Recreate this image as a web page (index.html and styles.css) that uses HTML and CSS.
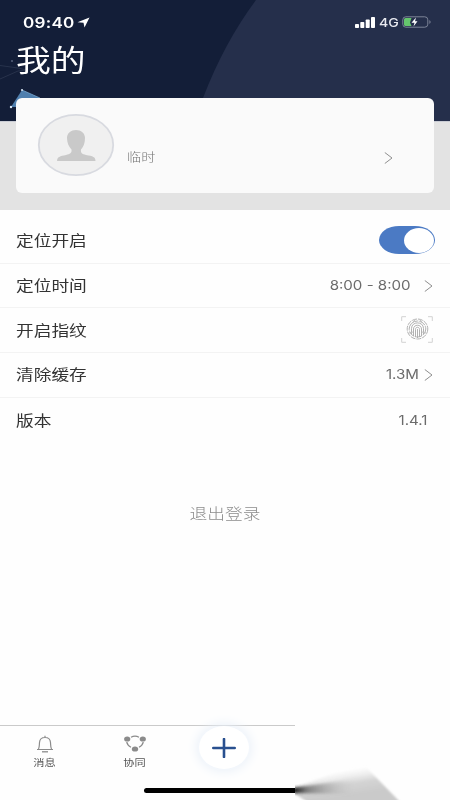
FILE: index.html
```html
<!DOCTYPE html>
<html lang="zh-CN">
<head>
<meta charset="utf-8">
<meta name="viewport" content="width=device-width, initial-scale=1">
<title>我的</title>
<link rel="stylesheet" href="styles.css">
</head>
<body>
<div class="screen">
  <header class="header">
    <svg class="backdrop" width="450" height="121" viewBox="0 0 450 121" aria-hidden="true">
      <path d="M256 0Q224 43 203 98L194 122H450V0Z" fill="#252f4b"/>
      <path d="M0 65.500L18 68L26 70M0 79L18 71L28 70" fill="none" stroke="#2d3852" stroke-width=".8"/>
      <path d="M11 61H13" stroke="#77809a"/>
      <path d="M22 90L40 98L30 107H11Z" fill="#4f7fae"/>
      <path d="M22 90L40 98" stroke="#7fb0d8" stroke-width=".7"/>
      <circle cx="22" cy="90" r="1" fill="#dceaf6"/><circle cx="11" cy="107" r="1.200" fill="#dceaf6"/>
    </svg>
    <div class="status">
      <div class="clock"><span class="wide time">09:40</span>
        <svg width="13" height="11" viewBox="0 0 13 11"><path d="M.5 5.300L12.500.5L7.500 10.500L6.500 5.800Z" fill="#fff"/></svg>
      </div>
      <div class="signals">
        <svg width="20" height="11" viewBox="0 0 20 11" fill="#fff"><rect y="7" width="4" height="4" rx=".8"/><rect x="5.300" y="5" width="4" height="6" rx=".8"/><rect x="10.700" y="2.500" width="4" height="8.500" rx=".8"/><rect x="16" width="4" height="11" rx=".8"/></svg>
        <span class="wide net">4G</span>
        <svg width="30" height="12" viewBox="0 0 30 12"><rect x=".8" y=".8" width="25" height="10.400" rx="3" fill="none" stroke="#7c8498"/><path d="M3.500 2H9.500L8 6.500L9.500 10H3.500Q2 10 2 8.500V3.500Q2 2 3.500 2Z" fill="#65c56d"/><path d="M14 1.500L9.500 6.700H12.500L11.500 10.500L15.500 5.300H13Z" fill="#fff"/><path d="M27.500 4Q29.500 6 27.500 8Z" fill="#9198aa"/></svg>
      </div>
    </div>
    <h1 class="title wide">我的</h1>
    <section class="card">
      <svg class="avatar" width="78" height="64" viewBox="0 0 78 64"><ellipse cx="39" cy="32" rx="37.200" ry="30.200" fill="#f0f0f0" stroke="#d8dae0" stroke-width="1.800"/><path d="M39 17C44 17 48 20 48 25C48 30 46.500 34 44 36.500C43.500 40 45 41 49 42C56 43 58.500 44 58.500 48H20C20 44 23 43 29 42C33 41 35 40 34.500 36.500C32 34 30 30 30 25C30 20 34 17 39 17Z" fill="#c9c9c9"/></svg>
      <span class="name wide">临时</span>
      <svg class="arrow" width="9" height="12" viewBox="0 0 9 12"><path d="M.8.5L8 6L.8 11.500"/></svg>
    </section>
  </header>

  <main class="settings">
    <div class="row"><span class="label wide">定位开启</span><span class="toggle"><span class="knob"></span></span></div>
    <div class="row"><span class="label wide">定位时间</span><span class="value wide hours">8:00 - 8:00</span><svg class="arrow" width="9" height="12" viewBox="0 0 9 12"><path d="M.8.5L8 6L.8 11.500"/></svg></div>
    <div class="row"><span class="label wide">开启指纹</span>
      <svg class="finger" width="32" height="27" viewBox="0 0 32 27" fill="none">
        <path d="M5 .7H.7V5M27 .7H31.300V5M.7 22V26.300H5M27 26.300H31.300V22" stroke="#d2d2d2"/>
        <g stroke="#adadad" stroke-width=".95">
          <ellipse cx="16.500" cy="13" rx="10.300" ry="10" stroke-dasharray="5 1"/>
          <ellipse cx="16.500" cy="13" rx="8.300" ry="8" stroke-dasharray="7 1"/>
          <path d="M10.500 18V12.500C10.500 5 22.500 5 22.500 12.500V18M12.500 20V13C12.500 8 20.500 8 20.500 13V20M14.500 21V13.500C14.500 10.500 18.500 10.500 18.500 13.500V21M16.500 13V22"/>
          <path d="M8 17L12 16M21 16L25 17M9 9L14 4M19 4L24 9" stroke="#c0c0c0"/>
        </g>
      </svg></div>
    <div class="row"><span class="label wide">清除缓存</span><span class="value wide cache">1.3M</span><svg class="arrow" width="9" height="12" viewBox="0 0 9 12"><path d="M.8.5L8 6L.8 11.500"/></svg></div>
    <div class="row"><span class="label wide">版本</span><span class="value wide version">1.4.1</span></div>
    <button class="logout"><span class="wide">退出登录</span></button>
  </main>

  <nav class="tabs">
    <a class="tab"><svg width="18" height="18" viewBox="0 0 18 18" fill="none" stroke="#8b8b8b"><path d="M1 14.500H17M2.500 14C3.500 12 3.300 10 3.500 7.500C3.700 4 6 2.500 9 2.500C12 2.500 14.300 4 14.500 7.500C14.700 10 14.500 12 15.500 14M9 2.500V.8" stroke-width="1.200"/><path d="M6 16.800H12" stroke-width="1.300"/></svg><span class="wide">消息</span></a>
    <a class="tab"><svg width="22" height="18" viewBox="0 0 22 18"><path d="M7 2.200Q11 .2 15 2.200M2.700 7Q3.500 10.500 7 12.300M19.300 7Q18.500 10.500 15 12.300" fill="none" stroke="#8b8b8b" stroke-width="1.200"/><g fill="#8b8b8b"><ellipse cx="3.200" cy="4" rx="3.100" ry="2.600"/><ellipse cx="18.800" cy="4" rx="3.100" ry="2.600"/><ellipse cx="11" cy="14" rx="3.200" ry="2.600"/></g></svg><span class="wide">协同</span></a>
    <a class="add"><svg width="24" height="20" viewBox="0 0 24 20"><path d="M1.300 10H22.700M12 1V19" stroke="#29508f" stroke-width="2.600" stroke-linecap="round"/></svg></a>
  </nav>
  <div class="homebar"></div>
  <svg class="smudge" width="155" height="90" viewBox="0 0 155 90" aria-hidden="true">
    <defs>
      <linearGradient id="fade" gradientUnits="userSpaceOnUse" x1="48" y1="60" x2="52" y2="86"><stop stop-color="#e8e8e8" stop-opacity="0"/><stop offset=".55" stop-color="#d4d4d4"/><stop offset="1" stop-color="#cacaca"/></linearGradient>
      <linearGradient id="streak"><stop stop-color="#000"/><stop offset=".25" stop-color="#555" stop-opacity=".65"/><stop offset="1" stop-color="#bbb" stop-opacity="0"/></linearGradient>
      <filter id="soft" x="-10%" y="-30%" width="120%" height="160%"><feGaussianBlur stdDeviation="1"/></filter>
      <filter id="softer" x="-10%" y="-60%" width="120%" height="220%"><feGaussianBlur stdDeviation="1.500"/></filter>
    </defs>
    <rect width="155" height="90" fill="#fefefe"/>
    <path d="M0 77L40 63L71 57L106 93H14L0 84Z" fill="url(#fade)" filter="url(#soft)"/>
    <path d="M-3 78L60 69V84L-3 83Z" fill="url(#streak)" filter="url(#softer)"/>
  </svg>
</div>
</body>
</html>
```

FILE: styles.css
```css
* { box-sizing: border-box; }
body {
  margin: 0;
  background: #fefefe;
  font-family: Inter, "Noto Sans CJK SC", sans-serif;
  color: #333;
}
svg { display: block; flex: none; }
.screen {
  position: relative;
  display: flex;
  flex-direction: column;
  width: 450px;
  height: 800px;
  overflow: hidden;
}
.wide { display: block; transform: scaleX(1.18); transform-origin: left center; white-space: nowrap; }

.header {
  position: relative;
  height: 210px;
  background: linear-gradient(#131e38 0 121px, #c9ccd4 121px 122px, #e3e3e3 122px);
}
.backdrop { position: absolute; left: 0; top: 0; }
.status {
  position: relative;
  display: flex;
  justify-content: space-between;
  height: 44px;
  padding: 0 18px 0 23px;
  align-items: center;
  color: #fff;
}
.clock, .signals { display: flex; align-items: center; }
.time { width: 54px; font-size: 14.5px; font-weight: 600; letter-spacing: .2px; }
.net { width: 23px; margin-left: 4px; font-size: 12px; font-weight: 500; color: #e8eaf0; }
.title {
  position: relative;
  width: 70px;
  height: 54px;
  margin: 0 0 0 16px;
  font-size: 29.5px;
  font-weight: 400;
  line-height: 33px;
  color: #fff;
}
.card {
  position: relative;
  display: flex;
  align-items: flex-start;
  height: 95px;
  margin: 0 16px;
  padding: 15px 41px 0 21px;
  border-radius: 6px;
  background: #fafafa;
}
.name { margin: 35px auto 0 12px; font-size: 12px; line-height: 20px; font-weight: 300; color: #777; }
.arrow path { fill: none; stroke: #8e8e8e; stroke-width: 1; }
.card .arrow { margin-top: 39px; }

.settings { flex: 1; padding-top: 9px; }
.row {
  display: flex;
  align-items: center;
  height: 44.700px;
  padding: 0 17px 0 16px;
  border-bottom: 1px solid #f3f3f3;
}
.row:nth-child(5) { border-bottom: 0; }
.label { margin-right: auto; padding-bottom: 2px; font-size: 15px; }
.value { font-size: 12.800px; color: #6b6b6b; transform-origin: right center; }
.hours { margin-right: 13px; }
.cache { margin-right: 5px; }
.version { margin-right: 5px; }
.finger { margin-top: -2px; }
.toggle {
  display: flex;
  justify-content: flex-end;
  width: 56px;
  height: 28px;
  margin: -1px -2px 0 0;
  padding: 1.500px;
  border-radius: 20px / 14px;
  background: #4b7ac4;
}
.knob { width: 30px; height: 25px; border-radius: 50%; background: #fff; }
.logout {
  display: block;
  width: 100%;
  height: 44px;
  margin-top: 48.500px;
  border: 0;
  padding: 0;
  background: none;
  font: 300 15px Inter, "Noto Sans CJK SC", sans-serif;
  color: #8c8c8c;
}
.logout .wide, .tab .wide { transform-origin: center; }

.tabs {
  display: flex;
  height: 63px;
  border-top: 1px solid #cacaca;
}
.tab { display: flex; flex-direction: column; align-items: center; width: 90px; padding-top: 9px; }
.tab span { margin-top: 2px; font-size: 9.500px; line-height: 16px; color: #555; }
.add {
  display: flex;
  align-items: center;
  justify-content: center;
  width: 50px;
  height: 43px;
  margin-left: 19px;
  border-radius: 50%;
  background: #fff;
  box-shadow: 0 0 12px 2px #e9f0f9;
}
.homebar { flex: none; width: 170px; height: 5px; margin: 0 0 7px 144px; border-radius: 3px; background: #000; }
.smudge { position: absolute; left: 295px; top: 710px; }
```
